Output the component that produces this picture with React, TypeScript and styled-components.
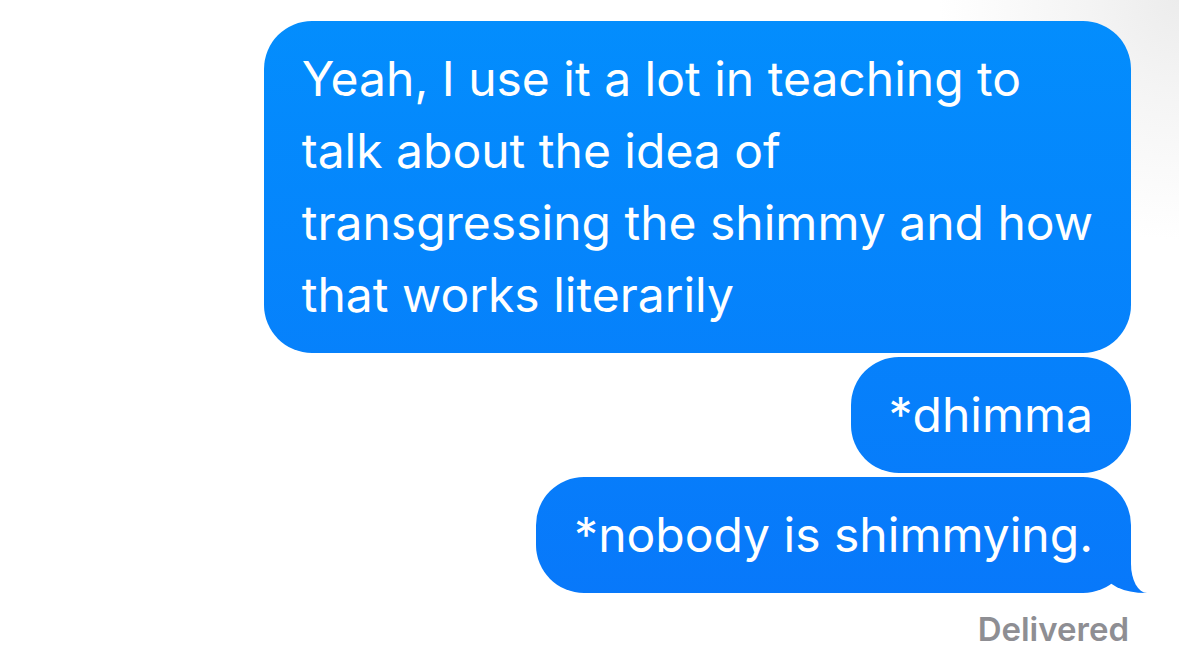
import React from 'react';
import styled, { createGlobalStyle } from 'styled-components';

const GlobalStyle = createGlobalStyle`
  html, body {
    margin: 0;
    padding: 0;
    height: 100%;
  }
  body {
    background: #fff;
    font-family: Inter, 'Noto Sans', 'Liberation Sans', sans-serif;
    -webkit-font-smoothing: antialiased;
    overflow: hidden;
  }
`;

const bubbleFill = 'linear-gradient(to bottom, #038efd 0, #0878fa 600px, #0a72f8 665px) fixed';

const Screen = styled.div`
  width: 1179px;
  height: 665px;
  box-sizing: border-box;
  padding: 21px 48px 0 0;
  display: flex;
  flex-direction: column;
  align-items: flex-end;
  gap: 4px;
  background:
    radial-gradient(circle at 100% 0, #ececec 0, #f4f4f4 90px, rgba(255, 255, 255, 0) 240px),
    #fff;
`;

const Bubble = styled.div<{ $tail?: boolean }>`
  position: relative;
  box-sizing: border-box;
  padding: 22px 38px;
  border-radius: 48px;
  color: #fff;
  font-size: 48px;
  line-height: 72px;
  letter-spacing: 0;
  white-space: nowrap;
  background: ${bubbleFill};

  ${({ $tail }) =>
    $tail &&
    `
    &::before {
      content: '';
      position: absolute;
      right: -16px;
      bottom: 0;
      width: 42px;
      height: 60px;
      background: ${bubbleFill};
      border-bottom-left-radius: 41px 20px;
    }
    &::after {
      content: '';
      position: absolute;
      right: -46px;
      bottom: 0;
      width: 46px;
      height: 60px;
      background: #fff;
      border-bottom-left-radius: 16px 29px;
    }
  `}
`;

const Status = styled.div`
  margin-top: 12px;
  margin-right: 2px;
  font-size: 33px;
  line-height: 40px;
  font-weight: 600;
  color: #8e8e93;
`;

const messages: { lines: string[]; tail?: boolean }[] = [
  {
    lines: [
      'Yeah, I use it a lot in teaching to',
      'talk about the idea of',
      'transgressing the shimmy and how',
      'that works literarily',
    ],
  },
  { lines: ['*dhimma'] },
  { lines: ['*nobody is shimmying.'], tail: true },
];

export default function App() {
  return (
    <>
      <GlobalStyle />
      <Screen>
        {messages.map((m, i) => (
          <Bubble key={i} $tail={m.tail}>
            {m.lines.map((l, j) => (
              <React.Fragment key={j}>
                {j > 0 && <br />}
                {l}
              </React.Fragment>
            ))}
          </Bubble>
        ))}
        <Status>Delivered</Status>
      </Screen>
    </>
  );
}
